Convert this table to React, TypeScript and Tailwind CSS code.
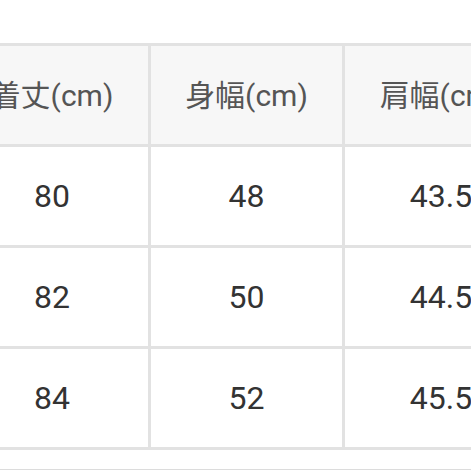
import React from "react";

const headers = ["着丈(cm)", "身幅(cm)", "肩幅(cm)"];
const rows = [
  ["80", "48", "43.5"],
  ["82", "50", "44.5"],
  ["84", "52", "45.5"],
];

export default function App() {
  return (
    <div
      className="w-[471px] h-[471px] overflow-hidden bg-white"
      style={{ fontFamily: "Roboto, 'Noto Sans CJK JP', sans-serif" }}
    >
      <div className="h-[43px]" />
      <div className="ml-[-44px] w-[640px] bg-[#e2e2e2] pt-[3px] pb-[3px]">
        <div className="grid grid-cols-[192px_191px_192px_60px] gap-x-[3px] gap-y-[3px]">
          {headers.map((h) => (
            <div
              key={h}
              className="h-[98px] bg-[#f7f7f7] flex items-center justify-center text-[30px] text-[#555]"
            >
              {h}
            </div>
          ))}
          <div className="h-[98px] bg-[#f7f7f7]" />
          {rows.map((r, i) => (
            <React.Fragment key={i}>
              {r.map((c, j) => (
                <div
                  key={j}
                  className="h-[98px] bg-white flex items-center justify-center text-[32px] text-[#333]"
                >
                  {c}
                </div>
              ))}
              <div className="h-[98px] bg-white" />
            </React.Fragment>
          ))}
        </div>
      </div>
      <div className="h-[19px] bg-white" />
      <div className="h-[1px] bg-[#dcdcdc]" />
    </div>
  );
}
